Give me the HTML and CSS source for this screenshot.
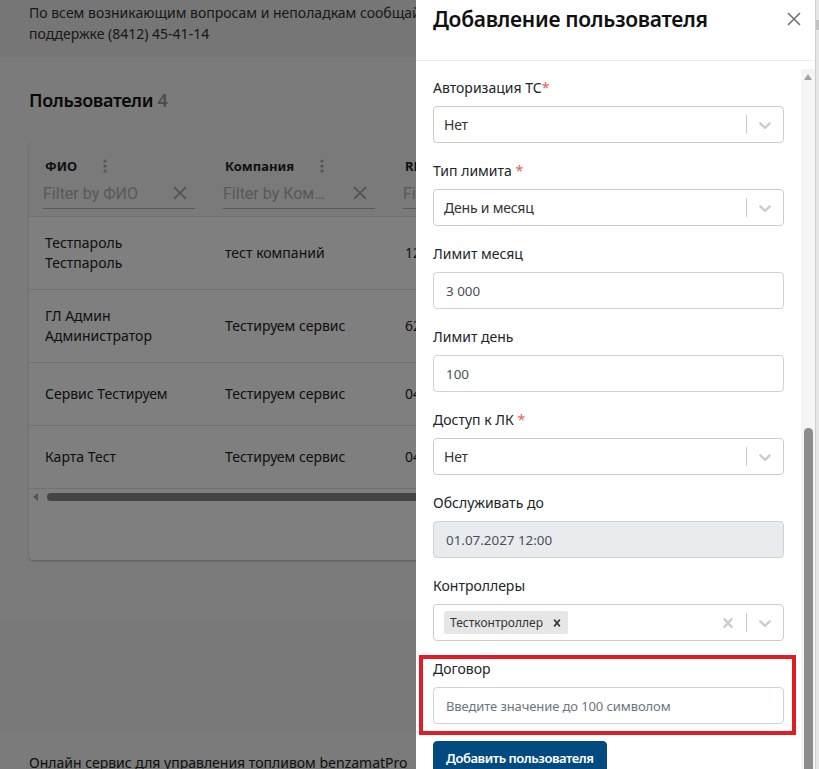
FILE: index.html
```html
<!DOCTYPE html>
<html lang="ru">
<head>
<meta charset="utf-8">
<title>Пользователи</title>
<link rel="stylesheet" href="styles.css">
</head>
<body>
<div class="page">
  <header class="notice">По всем возникающим вопросам и неполадкам сообщайте в службу технической<br>поддержке (8412) 45-41-14</header>
  <main class="main">
    <h1 class="page-title">Пользователи <span class="count">4</span></h1>
    <section class="card">
      <div class="thead">
        <div class="th">
          <div class="th-top"><span class="th-title">ФИО</span><svg class="kebab" width="4" height="14" viewBox="0 0 4 14"><circle cx="2" cy="2" r="1.6"/><circle cx="2" cy="7" r="1.6"/><circle cx="2" cy="12" r="1.6"/></svg></div>
          <div class="filter"><span class="filter-ph">Filter by ФИО</span><svg class="filter-x" width="22" height="22" viewBox="0 0 24 24"><path d="M19 6.41 17.59 5 12 10.59 6.41 5 5 6.41 10.59 12 5 17.59 6.41 19 12 13.41 17.59 19 19 17.59 13.41 12z"/></svg></div>
        </div>
        <div class="th">
          <div class="th-top"><span class="th-title">Компания</span><svg class="kebab" width="4" height="14" viewBox="0 0 4 14"><circle cx="2" cy="2" r="1.6"/><circle cx="2" cy="7" r="1.6"/><circle cx="2" cy="12" r="1.6"/></svg></div>
          <div class="filter"><span class="filter-ph">Filter by Ком…</span><svg class="filter-x" width="22" height="22" viewBox="0 0 24 24"><path d="M19 6.41 17.59 5 12 10.59 6.41 5 5 6.41 10.59 12 5 17.59 6.41 19 12 13.41 17.59 19 19 17.59 13.41 12z"/></svg></div>
        </div>
        <div class="th">
          <div class="th-top"><span class="th-title">RFID</span><svg class="kebab" width="4" height="14" viewBox="0 0 4 14"><circle cx="2" cy="2" r="1.6"/><circle cx="2" cy="7" r="1.6"/><circle cx="2" cy="12" r="1.6"/></svg></div>
          <div class="filter"><span class="filter-ph">Filter by RFID</span><svg class="filter-x" width="22" height="22" viewBox="0 0 24 24"><path d="M19 6.41 17.59 5 12 10.59 6.41 5 5 6.41 10.59 12 5 17.59 6.41 19 12 13.41 17.59 19 19 17.59 13.41 12z"/></svg></div>
        </div>
      </div>
      <div class="tr tall">
        <div class="td">Тестпароль<br>Тестпароль</div>
        <div class="td">тест компаний</div>
        <div class="td">1234567890</div>
      </div>
      <div class="tr tall">
        <div class="td">ГЛ Админ<br>Администратор</div>
        <div class="td">Тестируем сервис</div>
        <div class="td">6200000000</div>
      </div>
      <div class="tr">
        <div class="td">Сервис Тестируем</div>
        <div class="td">Тестируем сервис</div>
        <div class="td">0400000000</div>
      </div>
      <div class="tr">
        <div class="td">Карта Тест</div>
        <div class="td">Тестируем сервис</div>
        <div class="td">0400000001</div>
      </div>
      <div class="hscroll"><span class="hs-arrow"></span><span class="hs-thumb"></span></div>
      <div class="card-foot"></div>
    </section>
    <div class="band"></div>
  </main>
  <footer class="footer">Онлайн сервис для управления топливом benzamatPro</footer>
</div>

<div class="overlay"></div>

<aside class="modal">
  <div class="modal-header">
    <h2 class="modal-title">Добавление пользователя</h2>
    <svg class="modal-close" width="14" height="14" viewBox="0 0 14 14"><path d="M1 1 13 13M13 1 1 13"/></svg>
  </div>
  <div class="modal-body">
    <form class="form">
      <div class="group">
        <label class="label">Авторизация ТС<span class="req">*</span></label>
        <div class="select">
          <div class="select-value"><span class="single">Нет</span></div>
          <span class="sep"></span>
          <span class="indicator"><svg width="20" height="20" viewBox="0 0 20 20"><path d="M4.516 7.548c.436-.446 1.043-.481 1.576 0L10 11.295l3.908-3.747c.533-.481 1.141-.446 1.574 0 .436.445.408 1.197 0 1.615-.406.418-4.695 4.502-4.695 4.502a1.095 1.095 0 0 1-1.576 0S4.924 9.581 4.516 9.163s-.436-1.170 0-1.615z"/></svg></span>
        </div>
      </div>
      <div class="group">
        <label class="label">Тип лимита <span class="req">*</span></label>
        <div class="select">
          <div class="select-value"><span class="single">День и месяц</span></div>
          <span class="sep"></span>
          <span class="indicator"><svg width="20" height="20" viewBox="0 0 20 20"><path d="M4.516 7.548c.436-.446 1.043-.481 1.576 0L10 11.295l3.908-3.747c.533-.481 1.141-.446 1.574 0 .436.445.408 1.197 0 1.615-.406.418-4.695 4.502-4.695 4.502a1.095 1.095 0 0 1-1.576 0S4.924 9.581 4.516 9.163s-.436-1.170 0-1.615z"/></svg></span>
        </div>
      </div>
      <div class="group">
        <label class="label">Лимит месяц</label>
        <input class="input" type="text" value="3 000">
      </div>
      <div class="group">
        <label class="label">Лимит день</label>
        <input class="input" type="text" value="100">
      </div>
      <div class="group">
        <label class="label">Доступ к ЛК <span class="req">*</span></label>
        <div class="select">
          <div class="select-value"><span class="single">Нет</span></div>
          <span class="sep"></span>
          <span class="indicator"><svg width="20" height="20" viewBox="0 0 20 20"><path d="M4.516 7.548c.436-.446 1.043-.481 1.576 0L10 11.295l3.908-3.747c.533-.481 1.141-.446 1.574 0 .436.445.408 1.197 0 1.615-.406.418-4.695 4.502-4.695 4.502a1.095 1.095 0 0 1-1.576 0S4.924 9.581 4.516 9.163s-.436-1.170 0-1.615z"/></svg></span>
        </div>
      </div>
      <div class="group">
        <label class="label">Обслуживать до</label>
        <input class="input" type="text" value="01.07.2027 12:00" disabled>
      </div>
      <div class="group">
        <label class="label">Контроллеры</label>
        <div class="select">
          <div class="select-value multi">
            <span class="chip"><span class="chip-label">Тестконтроллер</span><span class="chip-remove"><svg width="14" height="14" viewBox="0 0 20 20"><path d="M14.348 14.849a1.2 1.2 0 0 1-1.697 0L10 11.819l-2.651 3.029a1.2 1.2 0 1 1-1.697-1.697l2.758-3.150-2.759-3.152a1.2 1.2 0 1 1 1.697-1.697L10 8.183l2.651-3.031a1.2 1.2 0 1 1 1.697 1.697l-2.758 3.152 2.758 3.150a1.2 1.2 0 0 1 0 1.698z"/></svg></span></span>
          </div>
          <span class="indicator"><svg width="20" height="20" viewBox="0 0 20 20"><path d="M14.348 14.849a1.2 1.2 0 0 1-1.697 0L10 11.819l-2.651 3.029a1.2 1.2 0 1 1-1.697-1.697l2.758-3.150-2.759-3.152a1.2 1.2 0 1 1 1.697-1.697L10 8.183l2.651-3.031a1.2 1.2 0 1 1 1.697 1.697l-2.758 3.152 2.758 3.150a1.2 1.2 0 0 1 0 1.698z"/></svg></span>
          <span class="sep"></span>
          <span class="indicator"><svg width="20" height="20" viewBox="0 0 20 20"><path d="M4.516 7.548c.436-.446 1.043-.481 1.576 0L10 11.295l3.908-3.747c.533-.481 1.141-.446 1.574 0 .436.445.408 1.197 0 1.615-.406.418-4.695 4.502-4.695 4.502a1.095 1.095 0 0 1-1.576 0S4.924 9.581 4.516 9.163s-.436-1.170 0-1.615z"/></svg></span>
        </div>
      </div>
      <div class="group marked">
        <label class="label">Договор</label>
        <input class="input" type="text" placeholder="Введите значение до 100 символом">
        <span class="highlight"></span>
      </div>
      <button class="btn-primary" type="button">Добавить пользователя</button>
    </form>
    <div class="vscroll">
      <span class="vs-arrow"></span>
      <span class="vs-track"></span>
      <span class="vs-thumb"></span>
    </div>
  </div>
</aside>

<div class="page-scroll"><span class="ps-thumb"></span></div>
</body>
</html>
```

FILE: styles.css
```css
* { box-sizing: border-box; }

html, body {
  margin: 0;
  padding: 0;
  height: 100%;
  overflow: hidden;
}

body {
  font-family: "Noto Sans", "Open Sans", sans-serif;
  font-size: 14px;
  color: #212529;
  background: #f6f6f6;
}

/* ---------- background page ---------- */
.page {
  width: 816px;
}

.notice {
  background: #ececec;
  padding: 2px 29px 13px;
  line-height: 21px;
  color: #333;
  white-space: nowrap;
  overflow: hidden;
}

.main {
  padding: 30px 0 0 29px;
}

.page-title {
  margin: 0 0 29px;
  font-size: 18px;
  line-height: 26px;
  font-weight: 600;
  letter-spacing: -0.35px;
  color: #111;
}

.page-title .count {
  color: #999;
}

.card {
  width: 760px;
  background: #fff;
  border-radius: 4px;
  box-shadow: 0 1px 2px rgba(0, 0, 0, 0.25);
  overflow: hidden;
}

.thead {
  display: grid;
  grid-template-columns: 180px 180px 180px;
  height: 75px;
  background: #f4f4f4;
  border-bottom: 1px solid #e2e2e2;
}

.th {
  padding: 14px 14px 0;
}

.th-top {
  display: flex;
  align-items: center;
  height: 20px;
  padding-left: 2px;
}

.th-title {
  font-size: 13px;
  font-weight: 700;
  color: #222;
}

.kebab {
  margin-left: 26px;
  fill: #aaa;
}

.filter {
  margin-top: 2px;
  width: 152px;
  height: 31px;
  display: flex;
  align-items: center;
  justify-content: space-between;
  border-bottom: 1px solid #b4b4b4;
  font-family: Roboto, "Noto Sans", sans-serif;
  font-size: 16px;
  color: #b3b3b3;
}

.filter-ph {
  white-space: nowrap;
}

.filter-x {
  fill: #a8a8a8;
  margin-right: 4px;
}

.tr {
  display: grid;
  grid-template-columns: 180px 180px 180px;
  align-items: center;
  min-height: 63px;
  border-bottom: 1px solid #e2e2e2;
}

.tr.tall .td {
  padding-top: 16px;
  padding-bottom: 16px;
}

.td {
  padding: 0 16px;
  line-height: 20px;
  color: #222;
  white-space: nowrap;
}

.hscroll {
  height: 15px;
  display: flex;
  align-items: center;
  padding-left: 4px;
}

.hs-arrow {
  width: 0;
  height: 0;
  border-top: 4px solid transparent;
  border-bottom: 4px solid transparent;
  border-right: 5px solid #a8a8a8;
  margin-right: 9px;
}

.hs-thumb {
  flex: 1;
  height: 8px;
  border-radius: 4px;
  background: #888;
}

.card-foot {
  height: 56px;
}

.band {
  margin: 60px 0 0 -29px;
  height: 112px;
  background: #f2f2f2;
}

.footer {
  padding: 20px 29px 0;
  line-height: 21px;
  color: #222;
  white-space: nowrap;
}

/* ---------- overlay ---------- */
.overlay {
  position: fixed;
  inset: 0;
  background: rgba(0, 0, 0, 0.5);
}

/* ---------- modal ---------- */
.modal {
  position: fixed;
  top: 0;
  bottom: 0;
  left: 416px;
  width: 400px;
  background: #fff;
  border-right: 1px solid #cfcfcf;
  display: flex;
  flex-direction: column;
}

.modal-header {
  height: 61px;
  flex: none;
  display: flex;
  align-items: flex-start;
  justify-content: space-between;
  padding: 4px 14px 0 17px;
  border-bottom: 1px solid #ebebeb;
}

.modal-title {
  margin: 0;
  font-size: 21px;
  line-height: 30px;
  font-weight: 600;
  letter-spacing: -0.3px;
  color: #111;
}

.modal-close {
  margin-top: 8px;
  stroke: #6d6d6d;
  stroke-width: 1.5;
  fill: none;
}

.modal-body {
  flex: 1;
  min-height: 0;
  display: flex;
  overflow: hidden;
}

.form {
  flex: 1;
  margin: 0;
  padding: 16px 17px 0;
}

.group {
  margin-bottom: 17px;
}

.group.marked {
  position: relative;
}

.label {
  display: block;
  margin-bottom: 8px;
  line-height: 21px;
  font-size: 14px;
  color: #212529;
}

.req {
  color: #f0595c;
}

.select {
  display: flex;
  align-items: center;
  height: 37px;
  border: 1px solid #ccc;
  border-radius: 4px;
  background: #fff;
}

.select-value {
  flex: 1;
  padding: 2px 8px;
  display: flex;
  align-items: center;
}

.single {
  margin: 0 2px;
  color: #333;
  font-size: 14px;
  letter-spacing: -0.2px;
}

.sep {
  align-self: stretch;
  width: 1px;
  margin: 8px 0;
  background: #ccc;
}

.indicator {
  display: flex;
  padding: 8px;
  fill: #ccc;
}

.chip {
  display: flex;
  align-items: center;
  margin: 2px;
  height: 23px;
  background: #e6e6e6;
  border-radius: 2px;
}

.chip-label {
  padding: 3px 3px 3px 6px;
  font-size: 12px;
  color: #333;
}

.chip-remove {
  display: flex;
  padding: 0 4px;
  fill: #333;
}

.input {
  display: block;
  width: 100%;
  height: 37px;
  padding: 0 12px;
  border: 1px solid #ced4da;
  border-radius: 4px;
  font-family: "Noto Sans", "Open Sans", sans-serif;
  font-size: 13.4px;
  color: #495057;
  background: #fff;
  outline: none;
}

.input:disabled {
  background: #e9ecef;
  color: #495057;
}

.input::placeholder {
  color: #6c757d;
  opacity: 1;
  font-size: 13px;
  letter-spacing: -0.1px;
}

.highlight {
  position: absolute;
  top: -3px;
  left: -14px;
  right: -12px;
  bottom: -11px;
  border: 4px solid #e31b23;
  pointer-events: none;
}

.btn-primary {
  display: block;
  height: 35px;
  padding: 6px 12px;
  border: 1px solid #034a80;
  border-radius: 4px;
  background: #034a80;
  color: #fff;
  font-family: "Noto Sans", "Open Sans", sans-serif;
  font-size: 13px;
  line-height: 21px;
  font-weight: 600;
  letter-spacing: -0.45px;
}

/* fake scrollbar of the modal body */
.vscroll {
  width: 14px;
  margin-top: 8px;
  background: #f5f5f5;
  display: flex;
  flex-direction: column;
  align-items: center;
}

.vs-arrow {
  flex: none;
  margin-top: 5px;
  width: 0;
  height: 0;
  border-left: 4.5px solid transparent;
  border-right: 4.5px solid transparent;
  border-bottom: 6px solid #a3a3a3;
}

.vs-track {
  flex: none;
  height: 348px;
}

.vs-thumb {
  flex: 1;
  width: 9px;
  border-radius: 5px 5px 0 0;
  background: #8c8c8c;
}

/* browser scrollbar strip at the right edge */
.page-scroll {
  position: fixed;
  top: 0;
  right: 0;
  width: 3px;
  height: 100%;
  background: #e6e6e6;
}

.ps-thumb {
  display: block;
  margin-top: 20px;
  height: 10px;
  background: #c2c2c2;
}
```
